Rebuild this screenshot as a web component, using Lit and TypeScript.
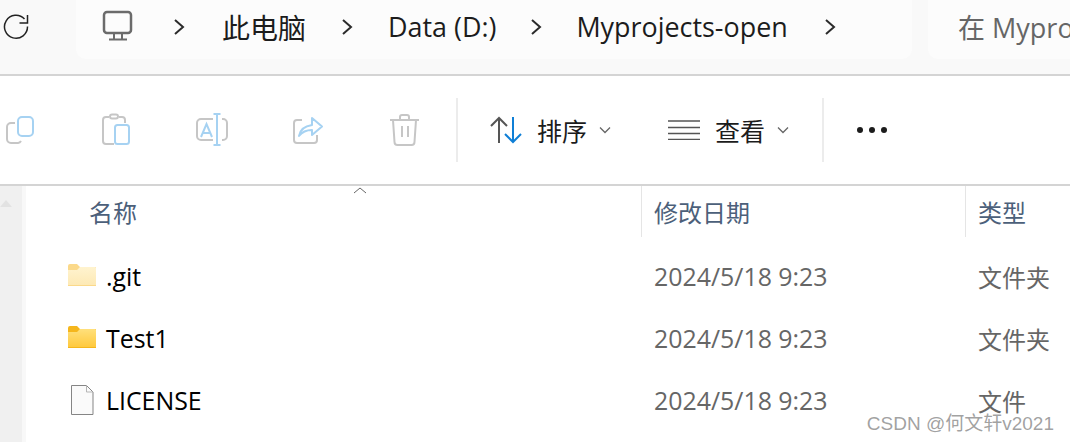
import {LitElement, css, html, svg} from "lit";
import {customElement} from "lit/decorators.js";

const rows = [
  {name: ".git", kind: "hidden", type: "文件夹"},
  {name: "Test1", kind: "folder", type: "文件夹"},
  {name: "LICENSE", kind: "file", type: "文件"},
];

const chevron = html`<svg class="sep" width="12" height="18" viewBox="0 0 12 18">
  <path d="M2 2l8 7-8 7" fill="none" stroke="#2b2b2b" stroke-width="2"/>
</svg>`;

const caret = html`<svg class="caret" width="12" height="8" viewBox="0 0 12 8">
  <path d="M1 1.5l5 5 5-5" fill="none" stroke="#666" stroke-width="1.3"/>
</svg>`;

function rowIcon(kind: string) {
  if (kind === "file") {
    return html`<svg width="28" height="30" viewBox="0 0 28 30">
      <path d="M3.500.5h15l6.500 6.500v22.500h-21.500z" fill="#fafafa" stroke="#858585"/>
      <path d="M18.500.5v6.500h6.500" fill="none" stroke="#b5b5b5"/>
    </svg>`;
  }
  const back = kind === "hidden" ? "#fbd98a" : "#f5b61c";
  const top = kind === "hidden" ? "#fff3cf" : "#ffe07c";
  const bottom = kind === "hidden" ? "#fde9b4" : "#ffc83a";
  return html`<svg class="folder" width="28" height="22" viewBox="0 0 28 22">
    <defs><linearGradient id="g${kind}" x1="0" y1="0" x2="0" y2="1">
      <stop offset="0" stop-color="${top}"/><stop offset="1" stop-color="${bottom}"/>
    </linearGradient></defs>
    <path d="M0 2a2 2 0 012-2h7l3 3h16v4H0z" fill="${back}"/>
    <path d="M0 6h9l3-3h15a1 1 0 011 1v17a1 1 0 01-1 1H1a1 1 0 01-1-1z" fill="url(#g${kind})"/>
    <path d="M0 21.500h28" stroke="${back}" stroke-width="1"/>
  </svg>`;
}

const gray = "#c6c6c6";
const blue = "#a6d2f2";

const toolIcons = [
  svg`<path d="M12 11H8a4 4 0 00-4 4v12a4 4 0 004 4h7a4 4 0 003-2" fill="none" stroke="${gray}" stroke-width="2"/>
    <rect x="15" y="5" width="15" height="19" rx="4" fill="#fff" stroke="${blue}" stroke-width="2"/>`,
  svg`<path d="M10 5H7a3 3 0 00-3 3v21a3 3 0 003 3h8M26 11V8a3 3 0 00-3-3h-3" fill="none" stroke="${gray}" stroke-width="2"/>
    <rect x="11" y="2.500" width="8" height="4" rx="2" fill="none" stroke="${gray}" stroke-width="2"/>
    <rect x="16" y="13" width="14" height="19" rx="2.500" fill="#fff" stroke="${blue}" stroke-width="2"/>`,
  svg`<path d="M18 7H6a4 4 0 00-4 4v13a4 4 0 004 4h12M27 7h1a4 4 0 014 4v13a4 4 0 01-4 4h-1" fill="none" stroke="${gray}" stroke-width="2"/>
    <path d="M6 25l5.500-13 5.500 13M8 21h7M22 2v31M18.500 2h7M18.500 33h7" fill="none" stroke="${blue}" stroke-width="2"/>`,
  svg`<path d="M11 8H6a3 3 0 00-3 3v17a3 3 0 003 3h17a3 3 0 003-3v-5" fill="none" stroke="${gray}" stroke-width="2"/>
    <path d="M8 24c1-6 6-10 13-11V6l10 8.500-10 8.500v-5c-6 0-10 2-13 6z" fill="#fff" stroke="${blue}" stroke-width="2" stroke-linejoin="round"/>`,
  svg`<path d="M3 8h29M13 8V5a2 2 0 012-2h5a2 2 0 012 2v3M6 8l1.500 22a3 3 0 003 3h14a3 3 0 003-3L29 8M15 14v11M21 14v11" fill="none" stroke="${gray}" stroke-width="2"/>`,
];

@customElement("app-root")
export class AppRoot extends LitElement {
  static override styles = css`
    :host {
      display: block;
      width: 1070px;
      height: 442px;
      overflow: hidden;
      position: relative;
      background: #fff;
      font-family: "Open Sans", "Noto Sans CJK SC", sans-serif;
      color: #1c1c1c;
    }

    .top {
      box-sizing: border-box;
      height: 76px;
      padding-bottom: 15px;
      display: flex;
      background: #f9f9f9;
      border-bottom: 2px solid #d4d4d4;
    }

    .refresh {
      width: 76px;
      padding: 13px 0 0 3px;
      box-sizing: border-box;
    }

    .crumbs {
      width: 836px;
      box-sizing: border-box;
      display: flex;
      align-items: center;
      padding: 0 0 6px 26px;
      background: #fcfcfc;
      border-radius: 0 0 10px 10px;
      font-size: 26.900px;
      white-space: nowrap;
    }

    .crumbs .pc { margin: 0 39px 1px 0; }
    .crumbs .sep { flex: none; }
    .crumbs span.first { font-size: 28px; margin: 0 35px 0 37px; }
    .crumbs span.data { margin: 0 34px 0 35px; }
    .crumbs span.last { margin: 0 36px 0 34px; }

    .search {
      flex: 1;
      margin-left: 16px;
      box-sizing: border-box;
      padding: 0 0 6px 30px;
      display: flex;
      align-items: center;
      background: #fcfcfc;
      border-radius: 0 0 0 10px;
      font-size: 27px;
      color: #666;
      white-space: nowrap;
      overflow: hidden;
    }

    .tools {
      box-sizing: border-box;
      height: 110px;
      display: flex;
      align-items: center;
      border-bottom: 2px solid #d4d4d4;
    }

    .tool {
      flex: none;
      width: 96px;
      display: flex;
      justify-content: center;
    }

    .tool-group {
      display: flex;
      margin-left: -28px;
      width: 484px;
    }

    .divider {
      width: 2px;
      height: 64px;
      background: #ececec;
      flex: none;
    }

    .cmd {
      display: flex;
      align-items: center;
      font-size: 25px;
      flex: none;
    }

    .caret { margin-left: 11px; }
    .sort { margin-left: 32px; width: 178px; gap: 15px; }
    .sort .caret { margin-left: -3px; }
    .view { width: 154px; gap: 15px; }
    .view .caret { margin-left: -3px; }

    .more {
      margin-left: 33px;
      display: flex;
      gap: 6px;
    }

    .more i {
      width: 6px;
      height: 6px;
      border-radius: 50%;
      background: #1c1c1c;
    }

    .body {
      display: flex;
      height: 256px;
    }

    .rail {
      box-sizing: border-box;
      width: 26px;
      background: #f0f0f0;
      border-right: 4px solid #f8f8f8;
      padding-top: 14px;
    }

    .rail b {
      display: block;
      width: 0;
      border: 5px solid transparent;
      border-top: 0;
      border-left-width: 6px;
      border-right-width: 6px;
      border-bottom: 7px solid #e2e2e2;
    }

    .list { flex: 1; }

    .row {
      display: grid;
      grid-template-columns: 615px 324px 1fr;
      height: 62px;
      align-items: center;
      font-size: 24.900px;
      white-space: nowrap;
    }

    .head {
      height: 51px;
      margin-bottom: 8px;
      color: #4c607a;
      font-size: 24px;
    }

    .head > div {
      height: 100%;
      box-sizing: border-box;
      display: flex;
      align-items: center;
      padding-left: 12px;
    }

    .head > div + div { border-left: 1px solid #e5e5e5; }
    .head > div:first-child { padding-left: 63px; }

    .name {
      display: flex;
      align-items: center;
      padding-left: 42px;
      color: #000;
    }

    .icon {
      width: 38px;
      display: flex;
      justify-content: center;
      padding-right: 10px;
      box-sizing: border-box;
    }

    .folder { margin-bottom: 2px; }

    .muted { padding-left: 13px; color: #666; }
    .type { font-size: 24px; }

    .sort-mark {
      position: absolute;
      left: 353px;
      top: 187px;
    }

    .mark {
      position: absolute;
      right: 16px;
      top: 412px;
      font-family: "Liberation Sans", "Noto Sans CJK SC", sans-serif;
      font-size: 19px;
      line-height: 24px;
      color: rgba(120, 120, 120, 0.7);
      white-space: nowrap;
    }
  `;

  override render() {
    return html`
      <div class="top">
        <div class="refresh">
          <svg width="27" height="27" viewBox="0 0 27 27">
            <path d="M21.500 6A11.500 11.500 0 1 0 24.500 13.500" fill="none" stroke="#222" stroke-width="1.500"/>
            <path d="M16.500 10H24.500V2" fill="none" stroke="#222" stroke-width="1.500"/>
          </svg>
        </div>
        <div class="crumbs">
          <svg class="pc" width="32" height="32" viewBox="0 0 32 32">
            <rect x="2" y="2" width="27" height="21" rx="3" fill="none" stroke="#6b6b6b" stroke-width="2.500"/>
            <path d="M12 24v5M20 24v5M7 29.500h18" fill="none" stroke="#6b6b6b" stroke-width="2"/>
          </svg>
          ${chevron}<span class="first">此电脑</span>
          ${chevron}<span class="data">Data (D:)</span>
          ${chevron}<span class="last">Myprojects-open</span>
          ${chevron}
        </div>
        <div class="search">在 Myprojects-open 中搜索</div>
      </div>

      <div class="tools">
        <div class="tool-group">
          ${toolIcons.map((icon) => html`<div class="tool">
            <svg width="34" height="36" viewBox="0 0 34 36">${icon}</svg>
          </div>`)}
        </div>
        <div class="divider"></div>
        <div class="cmd sort">
          <svg width="32" height="28" viewBox="0 0 32 28">
            <path d="M9 27V2M1 10l8-8 8 8" fill="none" stroke="#555" stroke-width="2"/>
            <path d="M23 1v25M15 18l8 8 8-8" fill="none" stroke="#0f7fd6" stroke-width="2"/>
          </svg>
          排序 ${caret}
        </div>
        <div class="cmd view">
          <svg width="32" height="20" viewBox="0 0 32 20">
            <path d="M0 1h32M0 7.500h32M0 13.500h32M0 19.500h32" stroke="#555" stroke-width="1.500"/>
          </svg>
          查看 ${caret}
        </div>
        <div class="divider"></div>
        <div class="more"><i></i><i></i><i></i></div>
      </div>

      <div class="body">
        <div class="rail"><b></b></div>
        <div class="list">
          <div class="row head">
            <div>名称</div>
            <div>修改日期</div>
            <div>类型</div>
          </div>
          ${rows.map((row) => html`<div class="row">
            <div class="name"><div class="icon">${rowIcon(row.kind)}</div>${row.name}</div>
            <div class="muted">2024/5/18 9:23</div>
            <div class="muted type">${row.type}</div>
          </div>`)}
        </div>
      </div>

      <svg class="sort-mark" width="14" height="7" viewBox="0 0 14 7">
        <path d="M1 6l6-5 6 5" fill="none" stroke="#666"/>
      </svg>
      <div class="mark">CSDN @何文轩v2021</div>
    `;
  }
}
